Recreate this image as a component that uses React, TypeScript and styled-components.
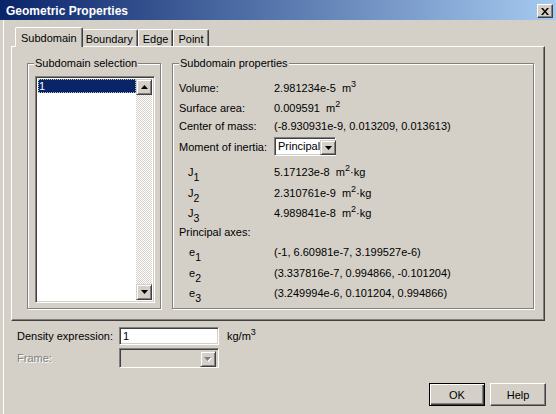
import React from 'react';
import styled, { createGlobalStyle } from 'styled-components';

const Global = createGlobalStyle`
  html, body { margin: 0; padding: 0; background: #D4D0C8; }
  body {
    font-family: "Liberation Sans", Arial, sans-serif;
    font-size: 11px;
    color: #000;
  }
  * { box-sizing: border-box; }
`;

const Window = styled.div`
  width: 556px;
  height: 414px;
  background: #D4D0C8;
  display: flex;
  flex-direction: column;
  overflow: hidden;
`;

const TitleBar = styled.div`
  height: 20px;
  flex: none;
  display: flex;
  align-items: center;
  justify-content: space-between;
  padding: 1px 3px 0 6px;
  background: linear-gradient(to right, #0A246A, #A6CAF0);
  color: #fff;
  font-weight: bold;
  font-size: 12px;
`;

const CloseButton = styled.div`
  width: 16px;
  height: 14px;
  margin-top: 1px;
  display: flex;
  align-items: center;
  justify-content: center;
  background: #D4D0C8;
  border: 1px solid;
  border-color: #fff #404040 #404040 #fff;
  box-shadow: inset -1px -1px #808080;
`;

const Body = styled.div`
  flex: 1;
  display: flex;
  flex-direction: column;
  margin-left: 3px;
  border-left: 1px solid #fff;
  padding: 7px 11px 0 7px;
`;

const TabStrip = styled.div`
  height: 19px;
  display: flex;
  align-items: flex-end;
  padding-left: 6px;
`;

const Tab = styled.div<{ $active?: boolean }>`
  position: relative;
  z-index: ${p => (p.$active ? 1 : 0)};
  height: ${p => (p.$active ? 20 : 17)}px;
  margin: 0 ${p => (p.$active ? -2 : 0)}px ${p => (p.$active ? -1 : 0)}px;
  padding: ${p => (p.$active ? '1px 5px 0' : '2px 4px 0')};
  display: flex;
  align-items: center;
  background: #D4D0C8;
  border-top: 1px solid #fff;
  border-left: 1px solid #fff;
  border-right: 1px solid #404040;
  box-shadow: inset -1px 0 #808080;
  border-radius: 2px 2px 0 0;
  white-space: nowrap;
`;

const Panel = styled.div`
  height: 275px;
  flex: none;
  display: flex;
  gap: 11px;
  padding: 16px 10px 11px 15px;
  border: 1px solid;
  border-color: #fff #404040 #404040 #fff;
  box-shadow: inset -1px -1px #808080;
`;

const Group = styled.div<{ $w?: number }>`
  position: relative;
  ${p => (p.$w ? `width: ${p.$w}px; flex: none;` : 'flex: 1;')}
  display: flex;
  flex-direction: column;
  border: 1px solid #808080;
  box-shadow: inset 1px 1px #fff, 1px 1px #fff;
`;

const Legend = styled.span`
  position: absolute;
  top: -7px;
  left: 6px;
  padding: 0 1px;
  line-height: 13px;
  background: #D4D0C8;
  white-space: nowrap;
`;

const SelectionBody = styled.div`
  flex: 1;
  display: flex;
  padding: 12px 5px 5px 7px;
`;

const ListBox = styled.div`
  flex: 1;
  display: flex;
  background: #fff;
  border: 1px solid;
  border-color: #808080 #fff #fff #808080;
  box-shadow: inset 1px 1px #404040, inset -1px -1px #D4D0C8;
  padding: 2px;
`;

const ListItems = styled.div`
  flex: 1;
  display: flex;
  flex-direction: column;
`;

const ListItem = styled.div<{ $selected?: boolean }>`
  height: 14px;
  line-height: 14px;
  padding-left: 1px;
  background: ${p => (p.$selected ? '#0A246A' : 'transparent')};
  color: ${p => (p.$selected ? '#fff' : '#000')};
  outline: ${p => (p.$selected ? '1px dotted #c8c8a0' : 'none')};
  outline-offset: -1px;
`;

const ScrollBar = styled.div`
  width: 16px;
  display: flex;
  flex-direction: column;
`;

const ScrollTrack = styled.div`
  flex: 1;
  background: repeating-conic-gradient(#D4D0C8 0 25%, #fff 0 50%) 0 0 / 2px 2px;
`;

const RaisedButton = styled.div<{ $w?: number; $h?: number }>`
  width: ${p => p.$w ?? 16}px;
  height: ${p => p.$h ?? 16}px;
  flex: none;
  display: flex;
  align-items: center;
  justify-content: center;
  background: #D4D0C8;
  border: 1px solid;
  border-color: #D4D0C8 #404040 #404040 #D4D0C8;
  box-shadow: inset 1px 1px #fff, inset -1px -1px #808080;
`;

const PropsBody = styled.div`
  flex: 1;
  display: flex;
  flex-direction: column;
  padding: 14px 6px 0 6px;
`;

const PropRow = styled.div<{ $h: number }>`
  height: ${p => p.$h}px;
  display: grid;
  grid-template-columns: 95px auto;
  align-items: start;
  line-height: 20px;
  white-space: nowrap;
`;

const PropLabel = styled.span<{ $indent?: number }>`
  padding-left: ${p => p.$indent ?? 0}px;
`;

const PropValue = styled.span``;

const Sup = styled.sup`
  font-size: 9px;
  vertical-align: 5px;
  line-height: 0;
`;

const Sub = styled.sub`
  font-size: 10.5px;
  vertical-align: -5px;
  line-height: 0;
`;

const Combo = styled.div<{ $w: number; $h: number; $disabled?: boolean }>`
  width: ${p => p.$w}px;
  height: ${p => p.$h}px;
  display: flex;
  align-items: stretch;
  border: 1px solid;
  border-color: #808080 #fff #fff #808080;
  box-shadow: inset 1px 1px #404040, inset -1px -1px #D4D0C8;
  background: ${p => (p.$disabled ? '#D4D0C8' : '#fff')};
  padding: 2px;
  line-height: 13px;
`;

const ComboText = styled.span`
  flex: 1;
  padding-left: 1px;
  display: flex;
  align-items: center;
`;

const Footer = styled.div`
  display: grid;
  grid-template-columns: 102px 100px auto;
  grid-template-rows: 18px 20px;
  row-gap: 3px;
  align-items: center;
  padding-left: 6px;
  margin-top: 6px;
`;

const FieldLabel = styled.span<{ $disabled?: boolean }>`
  color: ${p => (p.$disabled ? '#808080' : '#000')};
  text-shadow: ${p => (p.$disabled ? '1px 1px #fff' : 'none')};
`;

const TextField = styled.div`
  height: 18px;
  background: #fff;
  border: 1px solid;
  border-color: #808080 #fff #fff #808080;
  box-shadow: inset 1px 1px #404040, inset -1px -1px #D4D0C8;
  padding: 0 3px;
  line-height: 16px;
`;

const Unit = styled.span`
  padding-left: 8px;
`;

const ButtonRow = styled.div`
  display: flex;
  justify-content: flex-end;
  gap: 5px;
  margin: 15px -1px 0 0;
`;

const DialogButton = styled.div<{ $default?: boolean }>`
  width: 56px;
  height: 23px;
  display: flex;
  align-items: center;
  justify-content: center;
  background: #D4D0C8;
  border: 1px solid;
  border-color: ${p => (p.$default ? '#000' : '#fff #404040 #404040 #fff')};
  box-shadow: ${p =>
    p.$default
      ? 'inset 1px 1px #fff, inset -1px -1px #404040, inset -2px -2px #808080'
      : 'inset -1px -1px #808080'};
`;

const CloseGlyph = () => (
  <svg width="8" height="7" viewBox="0 0 8 7">
    <path d="M0 0 H2 L4 2.4 L6 0 H8 L5 3.5 L8 7 H6 L4 4.6 L2 7 H0 L3 3.5 Z" fill="#000" />
  </svg>
);

const Arrow = ({ up, color = '#000' }: { up?: boolean; color?: string }) => (
  <svg width="7" height="4" viewBox="0 0 7 4" style={{ overflow: 'visible' }}>
    {up ? (
      <polygon points="3.5,0 7,4 0,4" fill={color} />
    ) : (
      <polygon points="0,0 7,0 3.5,4" fill={color} />
    )}
  </svg>
);

const DisabledArrow = () => (
  <svg width="8" height="5" viewBox="0 0 8 5">
    <polygon points="1,1 8,1 4.5,5" fill="#fff" />
    <polygon points="0,0 7,0 3.5,4" fill="#808080" />
  </svg>
);

type Row = { h: number; label: React.ReactNode; indent?: number; value?: React.ReactNode };

const m2kg = (
  <>
    m<Sup>2</Sup>·kg
  </>
);

export default function App() {
  const rows: Row[] = [
    { h: 20, label: 'Volume:', value: <>2.981234e-5&nbsp; m<Sup>3</Sup></> },
    { h: 18, label: 'Surface area:', value: <>0.009591&nbsp; m<Sup>2</Sup></> },
    { h: 21, label: 'Center of mass:', value: '(-8.930931e-9, 0.013209, 0.013613)' },
  ];
  const jRows: Row[] = [
    { h: 21, label: <>J<Sub>1</Sub></>, indent: 9, value: <>5.17123e-8&nbsp; {m2kg}</> },
    { h: 20, label: <>J<Sub>2</Sub></>, indent: 9, value: <>2.310761e-9&nbsp; {m2kg}</> },
    { h: 19, label: <>J<Sub>3</Sub></>, indent: 9, value: <>4.989841e-8&nbsp; {m2kg}</> },
    { h: 20, label: 'Principal axes:' },
    { h: 21, label: <>e<Sub>1</Sub></>, indent: 10, value: '(-1, 6.60981e-7, 3.199527e-6)' },
    { h: 20, label: <>e<Sub>2</Sub></>, indent: 10, value: '(3.337816e-7, 0.994866, -0.101204)' },
    { h: 20, label: <>e<Sub>3</Sub></>, indent: 10, value: '(3.249994e-6, 0.101204, 0.994866)' },
  ];

  return (
    <>
      <Global />
      <Window>
        <TitleBar>
          <span>Geometric Properties</span>
          <CloseButton>
            <CloseGlyph />
          </CloseButton>
        </TitleBar>
        <Body>
          <TabStrip>
            <Tab $active>Subdomain</Tab>
            <Tab>Boundary</Tab>
            <Tab>Edge</Tab>
            <Tab>Point</Tab>
          </TabStrip>
          <Panel>
            <Group $w={134}>
              <Legend>Subdomain selection</Legend>
              <SelectionBody>
                <ListBox>
                  <ListItems>
                    <ListItem $selected>1</ListItem>
                  </ListItems>
                  <ScrollBar>
                    <RaisedButton>
                      <Arrow up />
                    </RaisedButton>
                    <ScrollTrack />
                    <RaisedButton>
                      <Arrow />
                    </RaisedButton>
                  </ScrollBar>
                </ListBox>
              </SelectionBody>
            </Group>
            <Group>
              <Legend>Subdomain properties</Legend>
              <PropsBody>
                {rows.map((r, i) => (
                  <PropRow key={i} $h={r.h}>
                    <PropLabel $indent={r.indent}>{r.label}</PropLabel>
                    <PropValue>{r.value}</PropValue>
                  </PropRow>
                ))}
                <PropRow $h={25}>
                  <PropLabel>Moment of inertia:</PropLabel>
                  <Combo $w={62} $h={19}>
                    <ComboText>Principal</ComboText>
                    <RaisedButton $w={16} $h={15}>
                      <Arrow />
                    </RaisedButton>
                  </Combo>
                </PropRow>
                {jRows.map((r, i) => (
                  <PropRow key={i} $h={r.h}>
                    <PropLabel $indent={r.indent}>{r.label}</PropLabel>
                    <PropValue>{r.value}</PropValue>
                  </PropRow>
                ))}
              </PropsBody>
            </Group>
          </Panel>
          <Footer>
            <FieldLabel>Density expression:</FieldLabel>
            <TextField>1</TextField>
            <Unit>
              kg/m<Sup>3</Sup>
            </Unit>
            <FieldLabel $disabled>Frame:</FieldLabel>
            <Combo $w={100} $h={20} $disabled>
              <ComboText />
              <RaisedButton $w={16} $h={16}>
                <DisabledArrow />
              </RaisedButton>
            </Combo>
            <span />
          </Footer>
          <ButtonRow>
            <DialogButton $default>OK</DialogButton>
            <DialogButton>Help</DialogButton>
          </ButtonRow>
        </Body>
      </Window>
    </>
  );
}
